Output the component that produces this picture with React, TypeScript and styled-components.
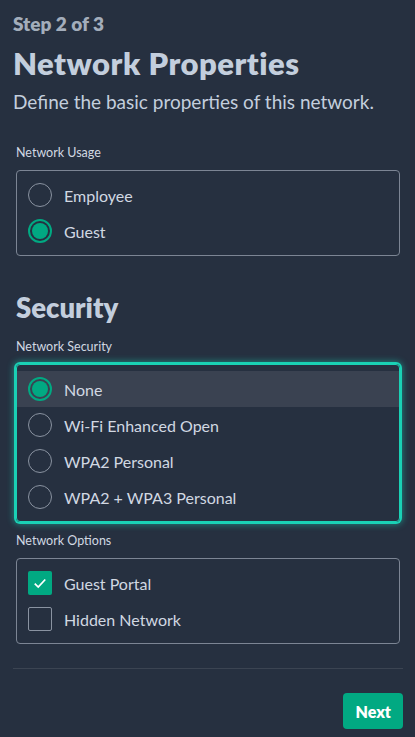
import React from 'react';
import styled, { createGlobalStyle } from 'styled-components';

const GlobalStyle = createGlobalStyle`
  html, body {
    margin: 0;
    padding: 0;
    background: #263040;
  }
  body {
    font-family: Lato, "Noto Sans", "Liberation Sans", sans-serif;
    color: #d1d8e2;
  }
`;

const Page = styled.div`
  width: 415px;
  min-height: 737px;
  box-sizing: border-box;
  padding: 11px 12px 8px 13px;
  display: flex;
  flex-direction: column;
`;

const StepText = styled.div`
  font-size: 19px;
  font-weight: 800;
  color: #a3adbb;
  line-height: 26px;
`;

const Title = styled.h1`
  margin: 6px 0 0;
  font-size: 31px;
  font-weight: 800;
  line-height: 40px;
  letter-spacing: 0.5px;
  color: #c3cedd;
`;

const Subtitle = styled.p`
  margin: 6px 0 0;
  font-size: 19px;
  line-height: 26px;
  color: #c3cedd;
`;

const SectionTitle = styled.h2`
  margin: 36px 0 0 3px;
  font-size: 27.5px;
  font-weight: 800;
  line-height: 32px;
  color: #c3cedd;
`;

const Field = styled.div<{ $top: number }>`
  margin: ${({ $top }) => $top}px 0 0 3px;
  width: 384px;
  display: flex;
  flex-direction: column;
`;

const FieldLabel = styled.label`
  font-size: 12.5px;
  line-height: 18px;
  color: #d1d8e2;
  margin-bottom: 8px;
`;

const OptionBox = styled.div<{ $focused?: boolean }>`
  border: 1px solid ${({ $focused }) => ($focused ? '#1ad1b5' : '#7c8594')};
  border-radius: 4px;
  padding: 6px 0;
  display: flex;
  flex-direction: column;
  box-shadow: ${({ $focused }) =>
    $focused ? '0 0 0 2px #1ad1b5, 0 0 6px 3px rgba(26, 209, 181, 0.45)' : 'none'};
`;

const OptionRow = styled.div<{ $active?: boolean }>`
  height: 36px;
  display: flex;
  align-items: center;
  gap: 12px;
  padding-left: 11px;
  background: ${({ $active }) => ($active ? '#3a4251' : 'transparent')};
  font-size: 16px;
  color: #d1d8e2;
`;

const RadioCircle = styled.span<{ $checked?: boolean }>`
  width: 24px;
  height: 24px;
  box-sizing: border-box;
  border-radius: 50%;
  border: ${({ $checked }) => ($checked ? '2px solid #01a982' : '1px solid #8a93a1')};
  display: flex;
  align-items: center;
  justify-content: center;
  &::after {
    content: '';
    display: ${({ $checked }) => ($checked ? 'block' : 'none')};
    width: 16px;
    height: 16px;
    border-radius: 50%;
    background: #01a982;
  }
`;

const CheckSquare = styled.span<{ $checked?: boolean }>`
  width: 24px;
  height: 24px;
  box-sizing: border-box;
  border-radius: 2px;
  border: ${({ $checked }) => ($checked ? 'none' : '1px solid #8a93a1')};
  background: ${({ $checked }) => ($checked ? '#01a982' : 'transparent')};
  display: flex;
  align-items: center;
  justify-content: center;
`;

const Divider = styled.hr`
  margin: 24px 0 0 0;
  width: 390px;
  border: none;
  border-top: 1px solid #3b4452;
`;

const Footer = styled.div`
  display: flex;
  justify-content: flex-end;
  padding-top: 24px;
  width: 390px;
`;

const NextButton = styled.button`
  height: 36px;
  padding: 0 12px;
  border: none;
  border-radius: 4px;
  background: #01a982;
  color: #ffffff;
  font-family: inherit;
  font-size: 16px;
  font-weight: 800;
`;

const Radio = ({ label, checked, active }: { label: string; checked?: boolean; active?: boolean }) => (
  <OptionRow $active={active}>
    <RadioCircle $checked={checked} />
    {label}
  </OptionRow>
);

const Check = ({ label, checked }: { label: string; checked?: boolean }) => (
  <OptionRow>
    <CheckSquare $checked={checked}>
      {checked && (
        <svg width="14" height="14" viewBox="0 0 24 24" fill="none" stroke="#fff" strokeWidth="3">
          <polyline points="3,13 9,19 21,6" />
        </svg>
      )}
    </CheckSquare>
    {label}
  </OptionRow>
);

export default function App() {
  return (
    <>
      <GlobalStyle />
      <Page>
        <StepText>Step 2 of 3</StepText>
        <Title>Network Properties</Title>
        <Subtitle>Define the basic properties of this network.</Subtitle>

        <Field $top={29}>
          <FieldLabel>Network Usage</FieldLabel>
          <OptionBox>
            <Radio label="Employee" />
            <Radio label="Guest" checked />
          </OptionBox>
        </Field>

        <SectionTitle>Security</SectionTitle>

        <Field $top={14}>
          <FieldLabel>Network Security</FieldLabel>
          <OptionBox $focused>
            <Radio label="None" checked active />
            <Radio label="Wi-Fi Enhanced Open" />
            <Radio label="WPA2 Personal" />
            <Radio label="WPA2 + WPA3 Personal" />
          </OptionBox>
        </Field>

        <Field $top={10}>
          <FieldLabel>Network Options</FieldLabel>
          <OptionBox>
            <Check label="Guest Portal" checked />
            <Check label="Hidden Network" />
          </OptionBox>
        </Field>

        <Divider />
        <Footer>
          <NextButton>Next</NextButton>
        </Footer>
      </Page>
    </>
  );
}
